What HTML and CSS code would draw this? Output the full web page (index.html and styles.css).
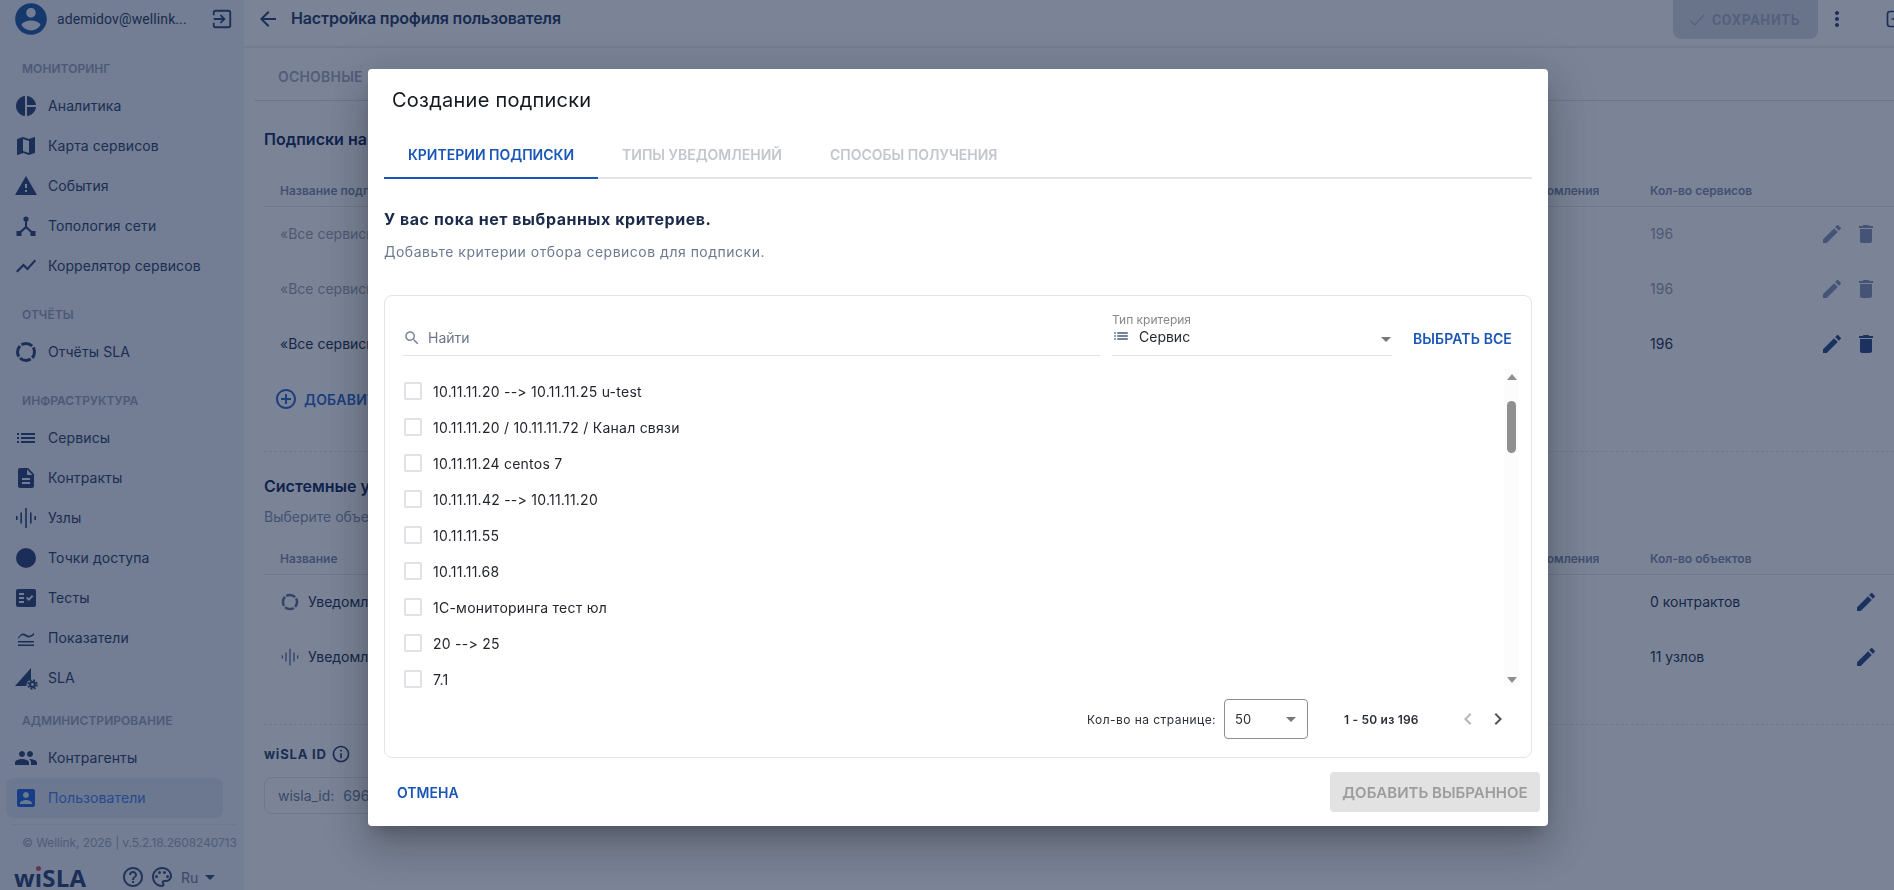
FILE: index.html
```html
<!DOCTYPE html>
<html lang="ru">
  <head>
    <meta charset="UTF-8" />
    <meta name="viewport" content="width=device-width, initial-scale=1.0" />
    <title>Настройка профиля пользователя</title>
    <link rel="stylesheet" href="styles.css">
  </head>
  <body>
    <svg class="sprite" xmlns="http://www.w3.org/2000/svg">
      <symbol id="i-account" viewBox="0 0 24 24"><path d="M12 2C6.48 2 2 6.48 2 12s4.48 10 10 10 10-4.48 10-10S17.52 2 12 2zm0 3c1.66 0 3 1.34 3 3s-1.34 3-3 3-3-1.34-3-3 1.34-3 3-3zm0 14.2c-2.5 0-4.71-1.28-6-3.22.03-1.99 4-3.08 6-3.08 1.99 0 5.97 1.09 6 3.08-1.29 1.94-3.5 3.22-6 3.22z"/></symbol>
      <symbol id="i-pie" viewBox="0 0 24 24"><path d="M11 2v20c-5.07-.5-9-4.79-9-10s3.93-9.5 9-10zm2.03 0v8.99H22c-.47-4.74-4.24-8.52-8.97-8.99zm0 11.01V22c4.74-.47 8.5-4.25 8.97-8.99h-8.97z"/></symbol>
      <symbol id="i-map" viewBox="0 0 24 24"><path d="M20.5 3l-.16.03L15 5.1 9 3 3.36 4.9c-.21.07-.36.25-.36.48V20.5c0 .28.22.5.5.5l.16-.03L9 18.9l6 2.1 5.64-1.9c.21-.07.36-.25.36-.48V3.5c0-.28-.22-.5-.5-.5zM15 19l-6-2.11V5l6 2.11V19z"/></symbol>
      <symbol id="i-warning" viewBox="0 0 24 24"><path d="M1 21h22L12 2 1 21zm12-3h-2v-2h2v2zm0-4h-2v-4h2v4z"/></symbol>
      <symbol id="i-topology" viewBox="0 0 24 24"><circle cx="12" cy="5" r="2.6"/><rect x="2.5" y="17" width="5" height="5"/><rect x="16.5" y="17" width="5" height="5"/><path d="M11 7h2v5.5l5.5 5-1.4 1.5-5.1-4.6-5.1 4.6-1.4-1.5 5.5-5z"/></symbol>
      <symbol id="i-chart" viewBox="0 0 24 24"><path d="M3.5 18.49l6-6.01 4 4L22 6.92l-1.41-1.41-7.09 7.97-4-4L2 16.99z"/></symbol>
      <symbol id="i-donut" viewBox="0 0 24 24"><circle cx="12" cy="12" r="8.5" fill="none" stroke="currentColor" stroke-width="3" stroke-dasharray="11.5 1.85" stroke-dashoffset="5"/></symbol>
      <symbol id="i-list" viewBox="0 0 24 24"><path d="M3 13h2v-2H3v2zm0 4h2v-2H3v2zm0-8h2V7H3v2zm4 4h14v-2H7v2zm0 4h14v-2H7v2zM7 7v2h14V7H7z"/></symbol>
      <symbol id="i-doc" viewBox="0 0 24 24"><path d="M14 2H6c-1.1 0-1.99.9-1.99 2L4 20c0 1.1.89 2 1.99 2H18c1.1 0 2-.9 2-2V8l-6-6zm2 16H8v-2h8v2zm0-4H8v-2h8v2zm-3-5V3.5L18.5 9H13z"/></symbol>
      <symbol id="i-nodes" viewBox="0 0 24 24"><rect x="2" y="10" width="1.6" height="4"/><rect x="6.4" y="6.5" width="1.6" height="11"/><rect x="11.2" y="2" width="1.6" height="20"/><rect x="16" y="6.5" width="1.6" height="11"/><rect x="20.4" y="10" width="1.6" height="4"/></symbol>
      <symbol id="i-dot" viewBox="0 0 24 24"><circle cx="12" cy="12" r="10"/></symbol>
      <symbol id="i-tests" viewBox="0 0 24 24"><path d="M20 3H4c-1.1 0-2 .9-2 2v14c0 1.1.9 2 2 2h16c1.1 0 2-.9 2-2V5c0-1.1-.9-2-2-2zM10 17H5v-2h5v2zm0-4H5v-2h5v2zm0-4H5V7h5v2zm4.82 6L12 12.16l1.41-1.41 1.41 1.42L17.99 9l1.42 1.42L14.82 15z"/></symbol>
      <symbol id="i-metrics" viewBox="0 0 24 24"><path d="M4 15h16v1.6H4zM4 18.5h16v1.6H4zM4 11.8c3-4.6 5-5.4 8-3.2 2.6 1.9 5 1.4 8-1.8v2c-3.2 3-5.8 3.6-9 1.3-2.4-1.7-4-1-6.4 2.5H4z"/></symbol>
      <symbol id="i-sla" viewBox="0 0 24 24"><path d="M1 20 17 2v11.5a6.5 6.5 0 0 0-4.6 6.5z"/><circle cx="18.5" cy="18.5" r="2.4" fill="none" stroke="currentColor" stroke-width="2"/><circle cx="18.5" cy="18.5" r="4.4" fill="none" stroke="currentColor" stroke-width="1.6" stroke-dasharray="2 1.45"/></symbol>
      <symbol id="i-people" viewBox="0 0 24 24"><path d="M16 11c1.66 0 2.99-1.34 2.99-3S17.66 5 16 5c-1.66 0-3 1.34-3 3s1.34 3 3 3zm-8 0c1.66 0 2.99-1.34 2.99-3S9.66 5 8 5C6.34 5 5 6.34 5 8s1.34 3 3 3zm0 2c-2.33 0-7 1.17-7 3.5V19h14v-2.5c0-2.33-4.67-3.5-7-3.5zm8 0c-.29 0-.62.02-.97.05 1.16.84 1.97 1.97 1.97 3.45V19h6v-2.5c0-2.33-4.67-3.5-7-3.5z"/></symbol>
      <symbol id="i-userbox" viewBox="0 0 24 24"><path d="M3 5v14c0 1.1.89 2 2 2h14c1.1 0 2-.9 2-2V5c0-1.1-.9-2-2-2H5c-1.11 0-2 .9-2 2zm12 4c0 1.66-1.34 3-3 3s-3-1.34-3-3 1.34-3 3-3 3 1.34 3 3zm-9 8c0-2 4-3.1 6-3.1s6 1.1 6 3.1v1H6v-1z"/></symbol>
      <symbol id="i-edit" viewBox="0 0 24 24"><path d="M3 17.25V21h3.75L17.81 9.94l-3.75-3.75L3 17.25zM20.71 7.04c.39-.39.39-1.02 0-1.41l-2.34-2.34c-.39-.39-1.02-.39-1.41 0l-1.83 1.83 3.75 3.75 1.83-1.83z"/></symbol>
      <symbol id="i-delete" viewBox="0 0 24 24"><path d="M6 19c0 1.1.9 2 2 2h8c1.1 0 2-.9 2-2V7H6v12zM19 4h-3.5l-1-1h-5l-1 1H5v2h14V4z"/></symbol>
      <symbol id="i-more" viewBox="0 0 24 24"><path d="M12 8c1.1 0 2-.9 2-2s-.9-2-2-2-2 .9-2 2 .9 2 2 2zm0 2c-1.1 0-2 .9-2 2s.9 2 2 2 2-.9 2-2-.9-2-2-2zm0 6c-1.1 0-2 .9-2 2s.9 2 2 2 2-.9 2-2-.9-2-2-2z"/></symbol>
      <symbol id="i-back" viewBox="0 0 24 24"><path d="M20 11H7.83l5.59-5.59L12 4l-8 8 8 8 1.41-1.41L7.83 13H20v-2z"/></symbol>
      <symbol id="i-check" viewBox="0 0 24 24"><path d="M4 12.5l5 5.5L20.5 6" fill="none" stroke="currentColor" stroke-width="1.4"/></symbol>
      <symbol id="i-search" viewBox="0 0 24 24"><path d="M15.5 14h-.79l-.28-.27C15.41 12.59 16 11.11 16 9.5 16 5.91 13.09 3 9.5 3S3 5.91 3 9.5 5.91 16 9.5 16c1.61 0 3.09-.59 4.23-1.57l.27.28v.79l5 4.99L20.49 19l-4.99-5zm-6 0C7.01 14 5 11.99 5 9.5S7.01 5 9.5 5 14 7.01 14 9.5 11.99 14 9.5 14z"/></symbol>
      <symbol id="i-prev" viewBox="0 0 24 24"><path d="M15.41 7.41L14 6l-6 6 6 6 1.41-1.41L10.83 12z"/></symbol>
      <symbol id="i-next" viewBox="0 0 24 24"><path d="M10 6L8.59 7.41 13.17 12l-4.58 4.58L10 18l6-6z"/></symbol>
      <symbol id="i-exit" viewBox="0 0 24 24"><path d="M3 8V5c0-1 .8-2 2-2h14c1.2 0 2 1 2 2v14c0 1-.8 2-2 2H5c-1.2 0-2-1-2-2v-3" fill="none" stroke="currentColor" stroke-width="2"/><path d="M11 7l-1.4 1.4 2.6 2.6H3v2h9.2l-2.6 2.6L11 17l5-5z"/></symbol>
      <symbol id="i-help" viewBox="0 0 24 24"><path d="M11 18h2v-2h-2v2zm1-16C6.48 2 2 6.48 2 12s4.48 10 10 10 10-4.48 10-10S17.52 2 12 2zm0 18c-4.41 0-8-3.59-8-8s3.59-8 8-8 8 3.59 8 8-3.59 8-8 8zm0-14c-2.21 0-4 1.79-4 4h2c0-1.1.9-2 2-2s2 .9 2 2c0 2-3 1.75-3 5h2c0-2.25 3-2.5 3-5 0-2.21-1.79-4-4-4z"/></symbol>
      <symbol id="i-palette" viewBox="0 0 24 24"><path d="M12 22C6.49 22 2 17.51 2 12S6.49 2 12 2s10 4.04 10 9c0 3.31-2.69 6-6 6h-1.77c-.28 0-.5.22-.5.5 0 .12.05.23.13.33.41.47.64 1.06.64 1.67 0 1.38-1.12 2.5-2.5 2.5zm0-18c-4.41 0-8 3.59-8 8s3.59 8 8 8c.28 0 .5-.22.5-.5 0-.16-.08-.28-.14-.35-.41-.46-.63-1.05-.63-1.65 0-1.38 1.12-2.5 2.5-2.5H16c2.21 0 4-1.79 4-4 0-3.86-3.59-7-8-7z"/><circle cx="6.5" cy="11.5" r="1.5"/><circle cx="9.5" cy="7.5" r="1.5"/><circle cx="14.5" cy="7.5" r="1.5"/><circle cx="17.5" cy="11.5" r="1.5"/></symbol>
      <symbol id="i-info" viewBox="0 0 24 24"><path d="M11 7h2v2h-2zm0 4h2v6h-2zm1-9C6.48 2 2 6.48 2 12s4.48 10 10 10 10-4.48 10-10S17.52 2 12 2zm0 18c-4.41 0-8-3.59-8-8s3.59-8 8-8 8 3.59 8 8-3.59 8-8 8z"/></symbol>
      <symbol id="i-add" viewBox="0 0 24 24"><path d="M13 7h-2v4H7v2h4v4h2v-4h4v-2h-4V7zm-1-5C6.48 2 2 6.48 2 12s4.48 10 10 10 10-4.48 10-10S17.52 2 12 2zm0 18c-4.41 0-8-3.59-8-8s3.59-8 8-8 8 3.59 8 8-3.59 8-8 8z"/></symbol>
      <symbol id="i-drop" viewBox="0 0 24 24"><path d="M7 10l5 5 5-5z"/></symbol>
      <symbol id="i-save" viewBox="0 0 24 24"><rect x="3" y="3" width="18" height="18" rx="3" fill="none" stroke="currentColor" stroke-width="2"/><path d="M11 8h2v3h3v2h-3v3h-2v-3H8v-2h3z"/></symbol>
    </svg>

    <div class="app">
      <!-- боковое меню -->
      <aside class="sidebar">
        <div class="user">
          <svg class="avatar"><use href="#i-account" /></svg>
          <span class="user-name">ademidov@wellink...</span>
          <svg class="user-exit"><use href="#i-exit" /></svg>
        </div>

        <div class="nav-label">Мониторинг</div>
        <a class="nav-item"><svg><use href="#i-pie" /></svg>Аналитика</a>
        <a class="nav-item"><svg><use href="#i-map" /></svg>Карта сервисов</a>
        <a class="nav-item"><svg><use href="#i-warning" /></svg>События</a>
        <a class="nav-item"><svg><use href="#i-topology" /></svg>Топология сети</a>
        <a class="nav-item"><svg><use href="#i-chart" /></svg>Коррелятор сервисов</a>

        <div class="nav-label">Отчёты</div>
        <a class="nav-item"><svg><use href="#i-donut" /></svg>Отчёты SLA</a>

        <div class="nav-label">Инфраструктура</div>
        <a class="nav-item"><svg><use href="#i-list" /></svg>Сервисы</a>
        <a class="nav-item"><svg><use href="#i-doc" /></svg>Контракты</a>
        <a class="nav-item"><svg><use href="#i-nodes" /></svg>Узлы</a>
        <a class="nav-item"><svg><use href="#i-dot" /></svg>Точки доступа</a>
        <a class="nav-item"><svg><use href="#i-tests" /></svg>Тесты</a>
        <a class="nav-item"><svg><use href="#i-metrics" /></svg>Показатели</a>
        <a class="nav-item"><svg><use href="#i-sla" /></svg>SLA</a>

        <div class="nav-label nav-label-admin">Администрирование</div>
        <a class="nav-item"><svg><use href="#i-people" /></svg>Контрагенты</a>
        <a class="nav-item active"><svg><use href="#i-userbox" /></svg>Пользователи</a>

        <div class="side-footer">
          <div class="copyright">© Wellink, 2026 | v.5.2.18.2608240713</div>
          <div class="side-tools">
            <span class="logo">w<span class="logo-i">ı</span>SLA</span>
            <svg class="tool tool-help"><use href="#i-help" /></svg>
            <svg class="tool tool-palette"><use href="#i-palette" /></svg>
            <span class="lang">Ru</span>
            <svg class="lang-drop"><use href="#i-drop" /></svg>
          </div>
        </div>
      </aside>

      <!-- страница профиля под модальным окном -->
      <main class="main">
        <header class="topbar">
          <svg class="back"><use href="#i-back" /></svg>
          <h1>Настройка профиля пользователя</h1>
          <button class="save"><svg><use href="#i-check" /></svg>Сохранить</button>
          <svg class="more"><use href="#i-more" /></svg>
          <svg class="save-alt"><use href="#i-save" /></svg>
        </header>

        <nav class="page-tabs"><span>Основные</span></nav>

        <div class="content">
          <h2>Подписки на уведомления</h2>
          <div class="table">
            <div class="tr th">
              <span>Название подписки</span><span>Тип уведомления</span><span>Кол-во сервисов</span><span></span>
            </div>
            <div class="tr faded">
              <span>«Все сервисы»</span><span></span><span>196</span>
              <span class="actions"><svg><use href="#i-edit" /></svg><svg><use href="#i-delete" /></svg></span>
            </div>
            <div class="tr faded">
              <span>«Все сервисы»</span><span></span><span>196</span>
              <span class="actions"><svg><use href="#i-edit" /></svg><svg><use href="#i-delete" /></svg></span>
            </div>
            <div class="tr">
              <span>«Все сервисы»</span><span></span><span>196</span>
              <span class="actions"><svg><use href="#i-edit" /></svg><svg><use href="#i-delete" /></svg></span>
            </div>
          </div>
          <div class="add-row"><svg><use href="#i-add" /></svg>Добавить</div>

          <hr class="dashed dashed-first" />

          <h2 class="h2-system">Системные уведомления</h2>
          <p class="hint">Выберите объекты</p>
          <div class="table table-system">
            <div class="tr th">
              <span>Название</span><span>Тип уведомления</span><span>Кол-во объектов</span><span></span>
            </div>
            <div class="tr">
              <span class="named"><svg class="named-icon"><use href="#i-donut" /></svg>Уведомления</span><span></span><span>0 контрактов</span>
              <span class="actions"><svg><use href="#i-edit" /></svg></span>
            </div>
            <div class="tr">
              <span class="named"><svg class="named-icon"><use href="#i-nodes" /></svg>Уведомления</span><span></span><span>11 узлов</span>
              <span class="actions"><svg><use href="#i-edit" /></svg></span>
            </div>
          </div>

          <hr class="dashed dashed-second" />

          <div class="id-title">wiSLA ID <svg><use href="#i-info" /></svg></div>
          <div class="id-box"><span>wisla_id:</span><b>696</b></div>
        </div>
      </main>
    </div>

    <div class="backdrop">
      <section class="modal">
        <div class="modal-title">Создание подписки</div>

        <div class="modal-tabs">
          <span class="modal-tab active">Критерии подписки</span>
          <span class="modal-tab">Типы уведомлений</span>
          <span class="modal-tab">Способы получения</span>
        </div>

        <h3 class="empty-title">У вас пока нет выбранных критериев.</h3>
        <p class="empty-text">Добавьте критерии отбора сервисов для подписки.</p>

        <div class="picker">
          <div class="toolbar">
            <div class="search">
              <svg><use href="#i-search" /></svg>
              <span>Найти</span>
            </div>
            <div class="type-select">
              <label>Тип критерия</label>
              <div class="type-value">
                <svg class="type-icon"><use href="#i-list" /></svg>
                <span>Сервис</span>
                <svg class="type-drop"><use href="#i-drop" /></svg>
              </div>
            </div>
            <a class="select-all">Выбрать все</a>
          </div>

          <div class="list-wrap">
            <ul class="list">
              <li><i class="checkbox"></i>10.11.11.20 --&gt; 10.11.11.25 u-test</li>
              <li><i class="checkbox"></i>10.11.11.20 / 10.11.11.72 / Канал связи</li>
              <li><i class="checkbox"></i>10.11.11.24 centos 7</li>
              <li><i class="checkbox"></i>10.11.11.42 --&gt; 10.11.11.20</li>
              <li><i class="checkbox"></i>10.11.11.55</li>
              <li><i class="checkbox"></i>10.11.11.68</li>
              <li><i class="checkbox"></i>1С-мониторинга тест юл</li>
              <li><i class="checkbox"></i>20 --&gt; 25</li>
              <li><i class="checkbox"></i>7.1</li>
            </ul>
            <div class="scrollbar">
              <i class="arrow-up"></i>
              <i class="thumb"></i>
              <i class="arrow-down"></i>
            </div>
          </div>

          <div class="pager">
            <span class="pager-label">Кол-во на странице:</span>
            <div class="pager-select">
              <span>50</span>
              <svg><use href="#i-drop" /></svg>
            </div>
            <span class="pager-range">1 - 50 из 196</span>
            <svg class="pager-btn off"><use href="#i-prev" /></svg>
            <svg class="pager-btn"><use href="#i-next" /></svg>
          </div>
        </div>

        <div class="modal-actions">
          <a class="cancel">Отмена</a>
          <button class="add-selected">Добавить выбранное</button>
        </div>
      </section>
    </div>
  </body>
</html>
```

FILE: styles.css
```css
* {
  box-sizing: border-box;
}

html,
body {
  margin: 0;
  height: 890px;
  overflow: hidden;
}

body {
  font-family: Inter, "Noto Sans", sans-serif;
  font-size: 14px;
  color: #2c3a5c;
  background: #fff;
  font-variant-ligatures: none;
  font-feature-settings: "calt" 0;
}

svg {
  fill: currentColor;
  display: block;
  flex: none;
}

.sprite {
  display: none;
}

.app {
  display: flex;
  width: 1894px;
  height: 890px;
}

/* боковое меню */
.sidebar {
  width: 244px;
  flex: none;
  display: flex;
  flex-direction: column;
  background: #edf0f5;
}

.sidebar > * {
  flex: none;
}

.user {
  height: 38px;
  display: flex;
  align-items: center;
  padding-left: 12px;
}

.avatar {
  width: 38px;
  height: 38px;
  color: #1d5aa3;
}

.user-name {
  margin-left: 7px;
  width: 154px;
  font-family: Roboto, sans-serif;
  font-size: 14px;
  letter-spacing: 0.1px;
  white-space: nowrap;
}

.user-exit {
  width: 22px;
  height: 22px;
  margin-left: 0;
  color: #2c4272;
}

.nav-label {
  height: 20px;
  line-height: 20px;
  margin: 19px 0 7px 22px;
  font-size: 12px;
  font-weight: 600;
  letter-spacing: 0.05px;
  color: #99a2b5;
  text-transform: uppercase;
}

.user + .nav-label {
  margin-top: 21px;
}

.nav-label-admin {
  margin-top: 13px;
  margin-bottom: 7px;
}

.nav-item {
  height: 40px;
  margin: 0 21px 0 6px;
  padding: 0 0 2px 10px;
  display: flex;
  align-items: center;
  gap: 12px;
  border-radius: 8px;
  letter-spacing: 0.1px;
  color: #2c3f68;
}

.nav-item svg {
  width: 20px;
  height: 20px;
  margin-top: 2px;
  transform: scale(1.2);
  color: #2c4272;
}

.nav-item.active {
  background: #dde2f0;
  color: #3f80e8;
}

.nav-item.active svg {
  color: #1f63d8;
}

.side-footer {
  margin: 6px 8px 0 12px;
  border-top: 1px solid #dfe3ea;
}

.copyright {
  margin: 9px 0 0 10px;
  height: 18px;
  line-height: 18px;
  font-size: 12px;
  letter-spacing: -0.1px;
  color: #a0a8b9;
  white-space: nowrap;
}

.side-tools {
  margin-top: 9px;
  height: 32px;
  display: flex;
  align-items: center;
  color: #3a4e78;
}

.logo {
  width: 107px;
  margin-left: 2px;
  font-family: "Open Sans", sans-serif;
  font-size: 24px;
  font-weight: 700;
  letter-spacing: 0.2px;
  color: #2c4272;
}

.logo-i {
  position: relative;
}

.logo-i::before {
  content: "";
  position: absolute;
  left: 1px;
  top: 5px;
  width: 5px;
  height: 5px;
  border-radius: 50%;
  background: #d2505f;
}

.tool {
  width: 24px;
  height: 24px;
}

.tool-palette {
  margin-left: 5px;
}

.lang {
  margin-left: 7px;
  color: #6c7c9c;
}

.lang-drop {
  width: 24px;
  height: 24px;
  margin-left: 0;
}

/* страница */
.main {
  flex: 1;
  min-width: 0;
  background: #fff;
}

.topbar {
  height: 48px;
  display: flex;
  align-items: flex-start;
  padding-left: 12px;
  border-bottom: 2px solid #eceef2;
}

.back {
  width: 24px;
  height: 24px;
  margin-top: 7px;
  color: #2c4272;
}

.topbar h1 {
  margin: 0 0 0 11px;
  flex: 1;
  line-height: 36px;
  font-size: 16px;
  font-weight: 600;
  letter-spacing: -0.15px;
  color: #263a63;
}

.save {
  width: 145px;
  height: 39px;
  display: flex;
  align-items: center;
  padding: 0 0 0 14px;
  gap: 5px;
  border: 0;
  border-radius: 0 0 8px 8px;
  background: #d8dce5;
  font-family: Roboto, sans-serif;
  font-size: 14px;
  font-weight: 700;
  letter-spacing: 0.7px;
  text-transform: uppercase;
  color: #a9afc0;
}

.save svg {
  width: 20px;
  height: 20px;
}

.more {
  width: 24px;
  height: 24px;
  margin: 7px 0 0 7px;
  color: #2c4272;
}

.save-alt {
  width: 20px;
  height: 20px;
  margin: 9px -11px 0 36px;
  color: #2c4272;
}

.page-tabs {
  height: 53px;
  margin-left: 10px;
  padding: 20px 0 0 24px;
  border-bottom: 1px solid #dfe3ea;
}

.page-tabs span {
  font-size: 14px;
  font-weight: 600;
  letter-spacing: 0.2px;
  text-transform: uppercase;
  color: #a5abba;
}

.content {
  padding-left: 20px;
}

.content h2 {
  margin: 26px 0 0;
  line-height: 24px;
  font-size: 16px;
  font-weight: 600;
  color: #13285c;
  white-space: nowrap;
}

.table {
  margin-top: 24px;
}

.tr {
  height: 55px;
  padding-bottom: 2px;
  display: grid;
  grid-template-columns: 1fr 157px 180px 80px;
  align-items: center;
  color: #22304f;
}

.tr > span {
  padding-left: 16px;
  white-space: nowrap;
}

.tr.th {
  height: 32px;
  padding-bottom: 0;
  border-bottom: 1px solid #dfe3ea;
  font-size: 12px;
  font-weight: 600;
  color: #7e8ba9;
}

.tr.faded {
  color: #9aa1b0;
}

.actions {
  display: flex;
  justify-content: flex-end;
  gap: 10px;
  padding-right: 16px;
  color: #2c4a85;
}

.actions svg {
  width: 24px;
  height: 24px;
}

.tr.faded .actions {
  color: #8796b5;
}

.add-row {
  height: 36px;
  margin: 9px 0 0 12px;
  display: flex;
  align-items: center;
  gap: 8px;
  font-weight: 600;
  letter-spacing: 0.2px;
  text-transform: uppercase;
  color: #2b66cc;
}

.add-row svg {
  width: 20px;
  height: 20px;
  transform: scale(1.2);
}

.dashed {
  margin: 0;
  border: 0;
  border-top: 1px dashed #dfe3ea;
}

.dashed-first {
  margin-top: 34px;
}

.dashed-second {
  margin-top: 39px;
}

.content h2.h2-system {
  margin-top: 22px;
}

.hint {
  margin: 9px 0 0;
  line-height: 20px;
  color: #8592ae;
  white-space: nowrap;
}

.table-system {
  margin-top: 16px;
}

.named {
  display: flex;
  align-items: center;
  gap: 8px;
}

.named-icon {
  width: 20px;
  height: 20px;
  color: #5d6f95;
}

.id-title {
  margin-top: 19px;
  height: 20px;
  display: flex;
  align-items: center;
  gap: 4px;
  font-size: 13px;
  font-weight: 700;
  letter-spacing: 0.8px;
  color: #2c3f68;
}

.id-title svg {
  width: 20px;
  height: 20px;
  color: #2c4272;
}

.id-box {
  width: 300px;
  height: 37px;
  margin-top: 13px;
  display: flex;
  align-items: center;
  gap: 9px;
  padding-left: 13px;
  border: 1px solid #dfe3ea;
  border-radius: 8px;
  color: #6f7d99;
}

.id-box b {
  font-weight: 400;
}

/* модальное окно */
.backdrop {
  position: fixed;
  inset: 0;
  padding: 69px 0 0 368px;
  background: rgba(15, 31, 66, 0.55);
}

.modal {
  width: 1180px;
  height: 757px;
  display: flex;
  flex-direction: column;
  padding: 19px 16px 0;
  border-radius: 4px;
  background: #fff;
  box-shadow: 0 11px 15px -7px rgba(0, 0, 0, 0.2), 0 24px 38px 3px rgba(0, 0, 0, 0.14), 0 9px 46px 8px rgba(0, 0, 0, 0.12);
}

.modal-title {
  height: 24px;
  line-height: 25px;
  margin-left: 8px;
  font-size: 20px;
  letter-spacing: 0.25px;
  color: #14181f;
}

.modal-tabs {
  height: 48px;
  margin-top: 19px;
  display: flex;
  border-bottom: 2px solid #e4e5e9;
}

.modal-tab {
  height: 48px;
  padding: 0 24px;
  line-height: 48px;
  font-size: 14px;
  font-weight: 600;
  text-transform: uppercase;
  color: #c3c6cc;
}

.modal-tab.active {
  color: #1a56b8;
  border-bottom: 2px solid #1a56b8;
}

.empty-title {
  margin: 28px 0 0;
  line-height: 24px;
  font-size: 16px;
  font-weight: 700;
  letter-spacing: 0.55px;
  color: #1b2a4a;
}

.empty-text {
  margin: 11px 0 0;
  line-height: 20px;
  font-size: 14px;
  letter-spacing: 0.5px;
  color: #6d7a90;
}

.picker {
  height: 463px;
  margin-top: 33px;
  padding: 0 12px 18px 18px;
  display: flex;
  flex-direction: column;
  border: 1px solid #e2e4e8;
  border-radius: 8px;
}

.toolbar {
  height: 60px;
  display: flex;
  align-items: flex-end;
}

.search {
  width: 697px;
  height: 36px;
  display: flex;
  align-items: center;
  gap: 7px;
  border-bottom: 1px solid #e2e2e2;
  color: #6c7686;
}

.search svg {
  width: 18px;
  height: 18px;
  color: #7c879a;
}

.type-select {
  width: 280px;
  margin-left: 12px;
  height: 44px;
  display: flex;
  flex-direction: column;
  border-bottom: 1px solid #e2e2e2;
}

.type-select label {
  height: 16px;
  line-height: 16px;
  font-size: 12px;
  color: #888;
}

.type-value {
  display: flex;
  align-items: center;
  margin-top: -2px;
  height: 20px;
  color: #262a33;
}

.type-icon {
  width: 18px;
  height: 18px;
  color: #48597a;
}

.type-value span {
  flex: 1;
  margin-left: 9px;
}

.type-drop {
  width: 24px;
  height: 24px;
  margin: 6px -6px 0 0;
  color: #777;
}

.select-all {
  margin: 0 0 9px 21px;
  font-size: 14px;
  font-weight: 600;
  letter-spacing: 0.1px;
  text-transform: uppercase;
  color: #1a56b8;
}

.list-wrap {
  flex: none;
  height: 320px;
  margin-top: 12px;
  display: flex;
}

.list {
  flex: 1;
  margin: 0;
  padding: 5px 0 0 1px;
  list-style: none;
  overflow: hidden;
  letter-spacing: 0.25px;
  color: #23262e;
}

.list li {
  height: 36px;
  display: flex;
  align-items: center;
  gap: 11px;
}

.checkbox {
  width: 18px;
  height: 18px;
  border: 2px solid #e2e2e6;
  border-radius: 2px;
}

.scrollbar {
  width: 15px;
  display: flex;
  flex-direction: column;
  align-items: center;
  background: #fcfcfc;
}

.arrow-up,
.arrow-down {
  width: 0;
  height: 0;
  border-left: 5.5px solid transparent;
  border-right: 5.5px solid transparent;
}

.arrow-up {
  margin-top: 6px;
  border-bottom: 6px solid #8f8f8f;
}

.thumb {
  width: 9px;
  height: 52px;
  margin-top: 21px;
  border-radius: 5px;
  background: #8f8f8f;
}

.arrow-down {
  margin-top: auto;
  margin-bottom: 5px;
  border-top: 6px solid #8f8f8f;
}

.pager {
  height: 40px;
  margin-top: 11px;
  padding-right: 9px;
  display: flex;
  align-items: center;
  justify-content: flex-end;
  color: #2b2f38;
}

.pager-label {
  font-size: 12px;
  letter-spacing: 0.45px;
}

.pager-select {
  width: 84px;
  height: 40px;
  margin-left: 8px;
  display: flex;
  align-items: center;
  justify-content: space-between;
  padding: 0 4px 0 10px;
  border: 1px solid #8e8e8e;
  border-radius: 4px;
  font-size: 13px;
}

.pager-select svg {
  width: 24px;
  height: 24px;
  color: #777;
}

.pager-range {
  width: 112px;
  margin-left: 36px;
  font-size: 12px;
  font-weight: 600;
  letter-spacing: 0.2px;
}

.pager-btn {
  width: 24px;
  height: 24px;
  color: #555;
}

.pager-btn.off {
  color: #b5b5b5;
}

.pager-btn + .pager-btn {
  margin: 0 0 0 6px;
}

.modal-actions {
  margin-top: 14px;
  display: flex;
  align-items: center;
  justify-content: space-between;
  margin-right: -8px;
}

.cancel {
  margin-left: 13px;
  font-size: 14px;
  font-weight: 600;
  text-transform: uppercase;
  color: #1a56b8;
}

.add-selected {
  width: 210px;
  height: 40px;
  border: 0;
  border-radius: 4px;
  background: #e2e2e2;
  font-family: Inter, sans-serif;
  font-size: 15px;
  font-weight: 600;
  text-transform: uppercase;
  color: #9c9c9c;
}
```
